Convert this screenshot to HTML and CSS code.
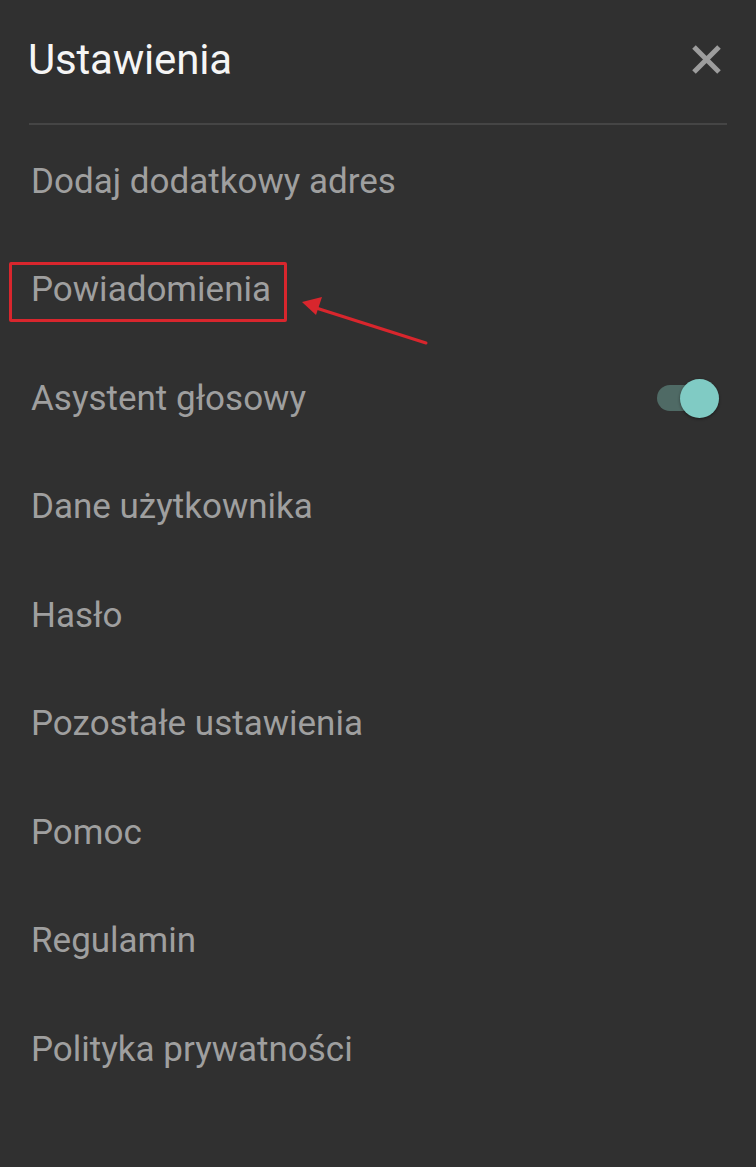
FILE: index.html
```html
<!DOCTYPE html>
<html lang="pl">
<head>
    <meta charset="UTF-8">
    <meta name="viewport" content="width=device-width, initial-scale=1.0">
    <title>Ustawienia</title>
    <link rel="stylesheet" href="styles.css">
</head>
<body>
    <div class="header">
        <h1>Ustawienia</h1>
        <button class="close" aria-label="Zamknij">
            <svg width="29" height="29" viewBox="0 0 29 29">
                <path d="M2 2 L27 27 M27 2 L2 27" stroke="#9d9d9d" stroke-width="5" fill="none"/>
            </svg>
        </button>
    </div>
    <div class="divider"></div>

    <!-- Menu -->
    <ul class="menu">
        <li class="item">Dodaj dodatkowy adres</li>
        <li class="item marked">
            <span>Powiadomienia</span>
            <div class="mark-box"></div>
            <svg class="mark-arrow" width="140" height="65" viewBox="0 0 140 65">
                <path d="M18 22 L131 58" stroke="#d8262d" stroke-width="3" stroke-linecap="round" fill="none"/>
                <path d="M7 17 L27 12 L21 30 Z" fill="#d8262d"/>
            </svg>
        </li>
        <li class="item">
            <span>Asystent głosowy</span>
            <div class="switch on">
                <div class="track"></div>
                <div class="thumb"></div>
            </div>
        </li>
        <li class="item">Dane użytkownika</li>
        <li class="item">Hasło</li>
        <li class="item">Pozostałe ustawienia</li>
        <li class="item">Pomoc</li>
        <li class="item">Regulamin</li>
        <li class="item">Polityka prywatności</li>
    </ul>
</body>
</html>
```

FILE: styles.css
```css
body {
    background-color: #303030;
    font-family: Roboto, 'Noto Sans', sans-serif;
    margin: 0;
    padding: 0;
}
.header {
    display: flex;
    align-items: center;
    justify-content: space-between;
    height: 118px;
    padding: 0 35px 0 28px;
}
h1 {
    margin: 0;
    color: #f5f5f5;
    font-size: 42px;
    font-weight: 400;
    letter-spacing: -0.2px;
}
.close {
    background: none;
    border: none;
    padding: 0;
    width: 29px;
    height: 29px;
    cursor: pointer;
}
.close svg {
    display: block;
}
.divider {
    height: 2px;
    margin: 5px 29px 0;
    background-color: #454545;
}
.menu {
    list-style: none;
    margin: 0;
    padding: 2px 37px 0 31px;
}
.item {
    position: relative;
    display: flex;
    align-items: center;
    justify-content: space-between;
    height: 108.5px;
    color: #9f9f9f;
    font-size: 35px;
}
.mark-box {
    position: absolute;
    left: -22px;
    top: 26px;
    width: 272px;
    height: 54px;
    border: 3px solid #d8262d;
    border-radius: 2px;
}
.mark-arrow {
    position: absolute;
    left: 264px;
    top: 49px;
}
.switch {
    position: relative;
    width: 62px;
    height: 39px;
}
.track {
    position: absolute;
    left: 0;
    top: 6px;
    width: 56px;
    height: 26px;
    border-radius: 13px;
    background-color: #4f6a65;
}
.thumb {
    position: absolute;
    right: 0;
    top: 0;
    width: 39px;
    height: 39px;
    border-radius: 50%;
    background-color: #80cbc4;
    box-shadow: 0 1px 3px rgba(0, 0, 0, 0.45);
}
```
